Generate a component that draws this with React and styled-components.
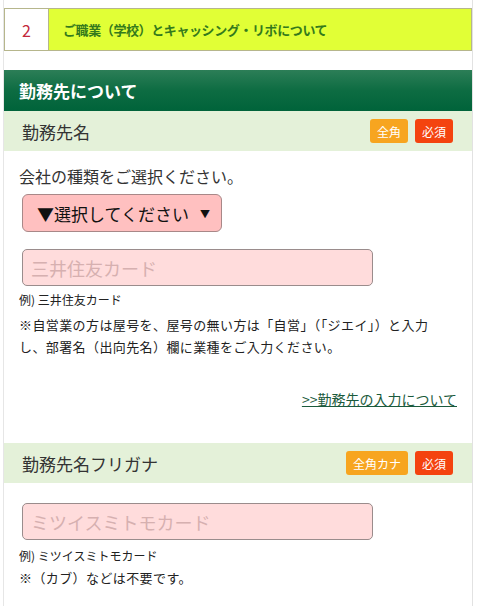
import React from 'react';
import styled, { createGlobalStyle } from 'styled-components';

const GlobalStyle = createGlobalStyle`
  html, body {
    margin: 0;
    padding: 0;
    background: #fff;
  }
  body {
    font-family: "Noto Sans CJK JP", "Noto Sans", sans-serif;
    color: #333;
  }
`;

const App = () => {
  return (
    <>
      <GlobalStyle />
      <Page>
        <StepBox>
          <StepNum>2</StepNum>
          <StepTitle>ご職業（学校）とキャッシング・リボについて</StepTitle>
        </StepBox>

        <SectionHead>勤務先について</SectionHead>

        <FieldHead>
          <FieldName>勤務先名</FieldName>
          <Badges>
            <Badge kind="zen">全角</Badge>
            <Badge kind="req">必須</Badge>
          </Badges>
        </FieldHead>
        <FieldBody>
          <Label>会社の種類をご選択ください。</Label>
          <SelectBox>
            <span>▼選択してください</span>
            <SelectArrow>▼</SelectArrow>
          </SelectBox>
          <TextInput placeholder="三井住友カード" $top={17} />
          <Example $top={5}>例) 三井住友カード</Example>
          <Note $top={5}>
            ※自営業の方は屋号を、屋号の無い方は「自営」（「ジエイ」）と入力
            <br />
            し、部署名（出向先名）欄に業種をご入力ください。
          </Note>
          <LinkRow>
            <HelpLink href="#">&gt;&gt;勤務先の入力について</HelpLink>
          </LinkRow>
        </FieldBody>

        <FieldHead>
          <FieldName>勤務先名フリガナ</FieldName>
          <Badges>
            <Badge kind="zen">全角カナ</Badge>
            <Badge kind="req">必須</Badge>
          </Badges>
        </FieldHead>
        <FieldBody>
          <TextInput placeholder="ミツイスミトモカード" $top={20} />
          <Example $top={7}>例) ミツイスミトモカード</Example>
          <Note $top={2}>※（カブ）などは不要です。</Note>
        </FieldBody>
      </Page>
    </>
  );
};

export default App;

const Page = styled.div`
  width: 468px;
  margin-left: 3px;
  min-height: 606px;
  border-left: 1px solid #e6e6e6;
  border-right: 1px solid #e2e2e2;
  padding-top: 8px;
  box-sizing: content-box;
`;

const StepBox = styled.div`
  display: flex;
  height: 41px;
  border: 1px solid #b6b68c;
`;

const StepNum = styled.div`
  width: 43px;
  display: flex;
  align-items: center;
  justify-content: center;
  background: #fff;
  border-right: 1px solid #b6b68c;
  color: #c3283c;
  font-size: 16px;
`;

const StepTitle = styled.div`
  flex: 1;
  display: flex;
  align-items: center;
  padding-left: 14px;
  background: #e1ff36;
  color: #347a1c;
  font-size: 13px;
  font-weight: 700;
  letter-spacing: -0.4px;
`;

const SectionHead = styled.div`
  margin-top: 19px;
  height: 41px;
  display: flex;
  align-items: center;
  padding-left: 15px;
  background: linear-gradient(180deg, #2c7e57 0%, #0d6c42 50%, #00633a 100%);
  color: #fff;
  font-size: 17px;
  font-weight: 700;
`;

const FieldHead = styled.div`
  height: 40px;
  display: flex;
  align-items: center;
  justify-content: space-between;
  padding: 0 19px 0 18px;
  background: #e4f1d9;
`;

const FieldName = styled.div`
  font-size: 17px;
  color: #333;
`;

const Badges = styled.div`
  display: flex;
  gap: 7px;
`;

const Badge = styled.span`
  height: 24px;
  padding: 0 7px;
  display: flex;
  align-items: center;
  border-radius: 3px;
  font-size: 12px;
  color: #fff;
  background: ${(p) => (p.kind === 'req' ? '#f4430f' : '#f7a520')};
`;

const FieldBody = styled.div`
  display: flex;
  flex-direction: column;
  align-items: flex-start;
  padding: 0 15px 0 15px;
`;

const Label = styled.div`
  margin-top: 14px;
  font-size: 16px;
  line-height: 22px;
  color: #333;
`;

const SelectBox = styled.div`
  margin: 7px 0 0 3px;
  width: 200px;
  height: 38px;
  box-sizing: border-box;
  display: flex;
  align-items: center;
  justify-content: space-between;
  padding: 0 11px 0 14px;
  background: #ffc0c0;
  border: 1px solid #a88888;
  border-radius: 6px;
  font-size: 17px;
  color: #111;
`;

const SelectArrow = styled.span`
  font-size: 10px;
`;

const TextInput = styled.input`
  margin: ${(p) => p.$top}px 0 0 3px;
  width: 351px;
  height: 37px;
  box-sizing: border-box;
  padding: 0 8px;
  background: #ffdcdc;
  border: 1px solid #9a8c8c;
  border-radius: 5px;
  font-family: "Noto Sans CJK JP", sans-serif;
  font-size: 18px;
  outline: none;
  &::placeholder {
    color: #d6b0b0;
  }
`;

const Example = styled.div`
  margin-top: ${(p) => p.$top}px;
  font-size: 12px;
  line-height: 18px;
  color: #222;
`;

const Note = styled.div`
  margin-top: ${(p) => p.$top}px;
  font-size: 13px;
  line-height: 22px;
  letter-spacing: 0.4px;
  color: #222;
`;

const LinkRow = styled.div`
  align-self: stretch;
  display: flex;
  justify-content: flex-end;
  margin-top: 30px;
  padding-bottom: 33px;
`;

const HelpLink = styled.a`
  font-size: 14px;
  line-height: 22px;
  color: #1b5a3c;
  text-decoration: underline;
`;
